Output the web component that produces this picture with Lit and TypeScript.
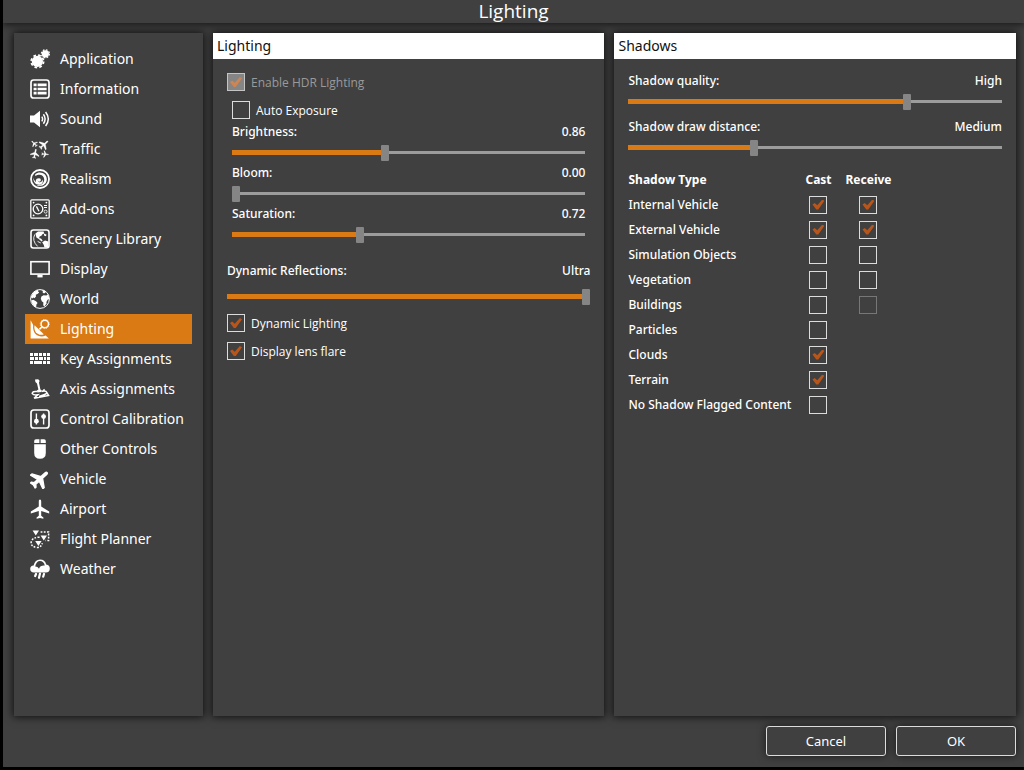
import { LitElement, html, svg, css, nothing } from "lit";
import { customElement, property, state } from "lit/decorators.js";
import { classMap } from "lit/directives/class-map.js";

const plane =
  "M10 .4c.8 0 1.200.9 1.200 2v5.200l8 5v1.800l-8-2.300v4.600l2.200 1.700v1.300L10 18.900l-3.400.8v-1.300l2.200-1.700v-4.600l-8 2.300v-1.800l8-5V2.400c0-1.100.4-2 1.200-2z";

const icons = {
  application: svg`
    <circle cx="7.400" cy="12.400" r="5.600"/>
    <circle cx="7.400" cy="12.400" r="6.200" fill="none" stroke="currentColor" stroke-width="1.800" stroke-dasharray="2.700 2.170"/>
    <circle cx="15.400" cy="4.800" r="3.600"/>
    <circle cx="15.400" cy="4.800" r="4" fill="none" stroke="currentColor" stroke-width="1.200" stroke-dasharray="1.700 1.440"/>`,
  information: svg`
    <rect x="1" y="1" width="18" height="18" rx="2.600" fill="none" stroke="currentColor" stroke-width="1.700"/>
    <path d="M3.600 4.600h3v2.600h-3zM7.600 4.600h9v2.600h-9zM3.600 8.700h3v2.600h-3zM7.600 8.700h9v2.600h-9zM3.600 12.800h3v2.600h-3zM7.600 12.800h9v2.600h-9z"/>`,
  sound: svg`
    <path d="M0 6.600h4l6-4.800v16.400l-6-4.800H0z"/>
    <path d="M11.800 7.600q1.600 2.400 0 4.800M13.400 5.200q3.400 4.800 0 9.600M15.600 3q5.400 7 0 14" fill="none" stroke="currentColor" stroke-width="1.500"/>`,
  traffic: svg`
    <g stroke="currentColor" stroke-width=".6">
      <path d=${plane} transform="translate(4.200 4.600) rotate(-45) scale(.36) translate(-10 -10)"/>
      <path d=${plane} transform="translate(14 5.600) rotate(48) scale(.54) translate(-10 -10)"/>
      <path d=${plane} transform="translate(5 14.600) rotate(12) scale(.48) translate(-10 -10)"/>
      <path d=${plane} transform="translate(15.200 15.200) rotate(95) scale(.36) translate(-10 -10)"/>
    </g>`,
  realism: svg`
    <circle cx="10" cy="10" r="9" fill="none" stroke="currentColor" stroke-width="1.800"/>
    <path d="M5.200 5.200C10 1.400 16.800 4.600 16.800 10.200c0 5.400-6 8.200-10.400 5.800 5 .6 8-2.200 7.800-5.800C14 6 9.600 4.200 5.200 7z"/>
    <path d="M3.400 8.600c-.4 4 2 7.600 6.200 7.200 3.200-.4 4-3.400 2.800-5.200 0 2-1.600 3-3.200 2.600-1.800-.4-1.800-2.600-.2-3.400C6.600 8.800 5.200 11 6 13.200 4.600 12.200 3.600 10.400 3.400 8.600z"/>
    <circle cx="9.200" cy="11" r="1.700"/>`,
  addons: svg`
    <rect x=".8" y=".8" width="18.400" height="18.400" rx="1" fill="none" stroke="currentColor" stroke-width="1.300"/>
    <circle cx="8" cy="10" r="4.800" fill="none" stroke="currentColor" stroke-width="1.300"/>
    <path d="m6.400 7.400 2.600 4.800" stroke="currentColor" stroke-width="1.300"/>
    <circle cx="3.600" cy="3.600" r=".9"/><circle cx="16.400" cy="3.600" r=".9"/><circle cx="3.600" cy="16.400" r=".9"/><circle cx="16.400" cy="16.400" r=".9"/>
    <path d="M14 6h3v1h-3zM14 8h3v1h-3z"/>
    <circle cx="15.600" cy="12.600" r="1.500" fill="none" stroke="currentColor" stroke-width=".8"/>`,
  scenery: svg`
    <rect x="1" y="1" width="18" height="18" rx="2.400" fill="none" stroke="currentColor" stroke-width="1.600"/>
    <path d="M5.400 4.600 8 2.600h5.600l.6 2-1.800.6-1 1.600-1.800.6-.4 1.800 1.800.4 1.600 1.800-1 1L8.800 10 6.400 8.400zM14 4.400l2.600 1.400-.8 1.400-1.800-.8zM12.200 13.200l2.800-1.600 3.400 1v5.800h-4l-.6-2.400z"/>
    <path d="M4.800 5.400Q1.600 11.600 7.600 17.400M7.600 12.400l3.200 1.600" fill="none" stroke="currentColor" stroke-width=".9"/>`,
  display: svg`
    <rect x=".9" y="2.700" width="18.200" height="12.400" fill="none" stroke="currentColor" stroke-width="1.600"/>
    <path d="M7.400 16h5.200v2.400H7.400z"/>`,
  world: svg`
    <circle cx="10" cy="10" r="9.400" fill="none" stroke="currentColor" stroke-width="1"/>
    <path d="M7.600.8 3.600 3.200.8 8l1.400 1.600 1.200-1.200 1 .8L6 7.600l-.2-1.800 2-1 1.400-1.400-1-1zM1.200 11.400l2-.6 2.800 1.400 1.600 1.800-1.200 1.600-.2 2.600-1.800-.6-2.200-3zM12 .8l.8 1.400-.2 1.400 1.400.8 1.600-.8-.4-1.800zM11.400 7.400l2.200-1.200 2.600.4 2.200-1 .9 4.400-1.700.8-1.200 2.200.2 1.400-2.200 3.200-1.200-1.400.2-2.800-1.600-1.200-1-2.400z"/>`,
  lighting: svg`
    <path d="M.6 1.200v18.400h18.200l-3.200-3.200c-4.800 2.800-13.600.2-12.400-10.400z"/>
    <path d="M4.600 6.200l9.200 9C8.800 17.400 3 13 4.600 6.200z"/>
    <path d="m9.400 10.400 3-3" stroke="currentColor" stroke-width="1.600"/>
    <circle cx="14.800" cy="5" r="3.700" fill="none" stroke="currentColor" stroke-width="1.500"/>
    <circle cx="14.800" cy="5" r="4.700" fill="none" stroke="currentColor" stroke-width=".6" stroke-dasharray="1 1.460"/>`,
  keys: svg`
    <path d="M0 4h3v3H0zM4 4h4v3H4zM9 4h3v3H9zM13 4h3v3h-3zM17 4h3v3h-3zM0 8h4v3H0zM5 8h3v3H5zM9 8h4v3H9zM14 8h2v3h-2zM17 8h3v3h-3zM0 12h3v3H0zM4 12h8v3H4zM13 12h3v3h-3zM17 12h3v3h-3z"/>`,
  axis: svg`
    <path d="M5 .6 8.200.2l1.400 1.600-.6 2 1.400 6.800 1.400.6-.4 1.800-4 .4-.6-2 1.600-1L7 4.600 5.400 3z"/>
    <path d="M7 12.600q-4.600-.6-4.800 2 1.400 1.800 5.600 1.200L4 19.200M11.600 12.400q4.600-1 5.400 1.400-1.600 2.200-8 3.600M4.200 19.200l14.400-2.800-1.600-2.600M12.600 12.200l2-1.800" fill="none" stroke="currentColor" stroke-width="1.500"/>`,
  calibration: svg`
    <rect x="1" y="1" width="18" height="18" rx="2.800" fill="none" stroke="currentColor" stroke-width="1.700"/>
    <path d="M5.700 4.400h1.400v11.200H5.700zM12.900 4.400h1.400v11.200h-1.400z"/>
    <circle cx="6.400" cy="12.200" r="2.400"/><circle cx="13.600" cy="7.600" r="2.400"/>`,
  mouse: svg`
    <path d="M4.200 4V2q0-1.800 1.800-1.800h3.400V4zM10.600.2H14q1.800 0 1.800 1.800v2h-5.200zM4.200 5.200h11.600V14q0 5.800-5.800 5.800T4.200 14z"/>`,
  vehicle: svg`<path d=${plane} transform="rotate(48 10 10)" stroke="currentColor" stroke-width="1.300" stroke-linejoin="round"/>`,
  airport: svg`<path d=${plane}/>`,
  planner: svg`
    <path d="M2.600 1.400h6.400L5.800 6.400zM10.600 6.600H17l-3.200 5zM5.200 12h6.400l-3.200 5z"/>
    <path d="M10.600 3h8v8.600h-3M9.600 8.200Q2 8.400 1.200 13t6.200 5.600q3.600-.2 5-4.400" fill="none" stroke="currentColor" stroke-width="1.500" stroke-dasharray="1.800 1.400"/>`,
  weather: svg`
    <path fill-rule="evenodd" d="M4 13.600Q.2 13.200.2 10q0-3 3.400-3.400Q5 .6 10 .6q5 0 6.200 5 3.600.4 3.600 4 0 3.800-4 4zM5.200 7.600Q7.600 7.400 9 9.800q1.200-3.600 5.800-3.200Q13.800 2 10 2T5.200 7.600z"/>
    <path d="m6 15-.8 2M10 14.600l-1 4.200M14 15l-.8 2.600" stroke="currentColor" stroke-width="2.200" stroke-linecap="round"/>`,
};

type IconName = keyof typeof icons;

const pages: [string, IconName][] = [
  ["Application", "application"],
  ["Information", "information"],
  ["Sound", "sound"],
  ["Traffic", "traffic"],
  ["Realism", "realism"],
  ["Add-ons", "addons"],
  ["Scenery Library", "scenery"],
  ["Display", "display"],
  ["World", "world"],
  ["Lighting", "lighting"],
  ["Key Assignments", "keys"],
  ["Axis Assignments", "axis"],
  ["Control Calibration", "calibration"],
  ["Other Controls", "mouse"],
  ["Vehicle", "vehicle"],
  ["Airport", "airport"],
  ["Flight Planner", "planner"],
  ["Weather", "weather"],
];

type Cell = "on" | "off" | "locked" | null;

const shadowRows: [string, Cell, Cell][] = [
  ["Internal Vehicle", "on", "on"],
  ["External Vehicle", "on", "on"],
  ["Simulation Objects", "off", "off"],
  ["Vegetation", "off", "off"],
  ["Buildings", "off", "locked"],
  ["Particles", "off", null],
  ["Clouds", "on", null],
  ["Terrain", "on", null],
  ["No Shadow Flagged Content", "off", null],
];

const checkboxStyles = css`
  input[type="checkbox"] {
    appearance: none;
    display: grid;
    place-items: center;
    flex: none;
    box-sizing: border-box;
    width: 18px;
    height: 18px;
    margin: 0;
    border: 1px solid #dcdcdc;
  }
  input[type="checkbox"]:checked::before {
    content: "";
    width: 12px;
    height: 10px;
    background: #b8551a;
    clip-path: polygon(0 50%, 18% 34%, 40% 58%, 82% 0, 100% 12%, 48% 100%, 32% 100%);
  }
  input[type="checkbox"]:disabled {
    border-color: #777;
  }
  input[type="checkbox"]:disabled:checked {
    border-color: #c4c4c4;
    background: #858585;
  }
  input[type="checkbox"]:disabled:checked::before {
    background: #cf8552;
  }
`;

@customElement("option-check")
class OptionCheck extends LitElement {
  @property() label = "";
  @property({ type: Boolean }) checked = false;
  @property({ type: Boolean }) disabled = false;

  static styles = [
    checkboxStyles,
    css`
      :host {
        display: block;
        font-family: "Open Sans", "Noto Sans", sans-serif;
        font-weight: 400;
      }
      .row {
        display: flex;
        align-items: center;
        gap: 6px;
        height: 28px;
      }
      .disabled {
        color: #9a9a9a;
      }
    `,
  ];

  render() {
    return html`<label class=${classMap({ row: true, disabled: this.disabled })}>
      <input type="checkbox" .checked=${this.checked} ?disabled=${this.disabled} />
      <span>${this.label}</span>
    </label>`;
  }
}

@customElement("option-slider")
class OptionSlider extends LitElement {
  @property() label = "";
  @property({ type: Number }) value = 0;
  @property({ type: Number }) max = 1;
  @property({ type: Number }) step = 1;
  @property({ attribute: false }) names: string[] = [];

  static styles = css`
    :host {
      display: block;
    }
    .head {
      display: flex;
      justify-content: space-between;
      padding-bottom: var(--label-gap, 0);
      line-height: 16px;
    }
    input {
      appearance: none;
      display: block;
      width: 100%;
      height: 25px;
      margin: 0;
      background:
        linear-gradient(#d97a14, #d97a14) left center / var(--fill) 5px no-repeat,
        linear-gradient(#9c9c9c, #9c9c9c) left center / 100% 3px no-repeat;
    }
    input::-webkit-slider-thumb {
      appearance: none;
      width: 8px;
      height: 16px;
      border-radius: 1px;
      background: #858585;
    }
  `;

  render() {
    const text = this.names.length ? this.names[this.value] : this.value.toFixed(2);
    return html`
      <div class="head">
        <label for="range">${this.label}</label>
        <output for="range">${text}</output>
      </div>
      <input
        id="range"
        type="range"
        min="0"
        max=${this.max}
        step=${this.step}
        .value=${String(this.value)}
        style="--fill: ${(this.value / this.max) * 100}%"
        @input=${(e: Event) => (this.value = Number((e.target as HTMLInputElement).value))}
      />
    `;
  }
}

@customElement("app-root")
class AppRoot extends LitElement {
  @state() page = "Lighting";

  static styles = [
    checkboxStyles,
    css`
      :host {
        display: flex;
        flex-direction: column;
        box-sizing: border-box;
        min-height: 100vh;
        border: solid #000;
        border-width: 0 0 3px 3px;
        background: #404040;
        color: #fff;
        font: 500 12px "Noto Sans", "Open Sans", sans-serif;
      }
      .title {
        margin: 0;
        height: 23px;
        background: #404040;
        box-shadow: 0 0 8px 1px rgba(0, 0, 0, 0.75);
        text-align: center;
        font-family: "Open Sans", "Noto Sans", sans-serif;
        font-size: 19px;
        font-weight: 400;
        line-height: 23px;
      }
      .main {
        flex: 1;
        display: grid;
        grid-template-columns: 189px minmax(0, 391fr) minmax(0, 401fr);
        gap: 10px;
        padding: 10px 8px 0 11px;
      }
      .panel {
        background: #404040;
        box-shadow: 0 0 8px 1px rgba(0, 0, 0, 0.75);
      }
      .nav {
        display: flex;
        flex-direction: column;
        padding: 11px;
      }
      .item {
        display: flex;
        align-items: center;
        gap: 10px;
        height: 30px;
        padding: 0 5px;
        color: #fff;
        font-size: 14px;
        font-weight: 400;
        line-height: 20px;
        text-decoration: none;
        white-space: nowrap;
      }
      .current {
        background: #d97a14;
      }
      .icon {
        flex: none;
        width: 20px;
        height: 20px;
        fill: currentColor;
      }
      .heading {
        margin: 0;
        padding: 0 4px;
        background: #fff;
        color: #111;
        font-size: 14px;
        font-weight: 400;
        line-height: 26px;
      }
      .options {
        padding: 9px 14px;
      }
      .nested {
        padding: 0 5px 16px;
      }
      .reflections {
        --label-gap: 5px;
      }
      .shadows {
        display: flex;
        flex-direction: column;
        gap: 5px;
        padding: 14px;
      }
      .table {
        table-layout: fixed;
        width: 270px;
        margin-top: 2px;
        border-collapse: collapse;
      }
      .table tr {
        height: 25px;
      }
      .table th,
      .table td {
        padding: 0;
        text-align: left;
        font-weight: inherit;
        white-space: nowrap;
      }
      .table thead th {
        font-weight: 700;
      }
      .table .cast,
      .table .receive {
        text-align: center;
      }
      .cast {
        width: 40px;
      }
      .receive {
        width: 60px;
      }
      .table input {
        margin: 0 auto;
      }
      .footer {
        display: flex;
        justify-content: flex-end;
        gap: 10px;
        padding: 10px 8px 11px;
      }
      .button {
        width: 120px;
        height: 30px;
        padding: 0;
        border: 1px solid #dcdcdc;
        border-radius: 3px;
        background: #404040;
        box-shadow: 0 0 8px rgba(0, 0, 0, 0.6);
        color: #fff;
        font: inherit;
        font-size: 13px;
        font-weight: 400;
      }
    `,
  ];

  private cell(name: string, kind: string, value: Cell) {
    return html`<td class=${kind.toLowerCase()}>
      ${value === null
        ? nothing
        : html`<input
            type="checkbox"
            aria-label="${name}: ${kind}"
            .checked=${value === "on"}
            ?disabled=${value === "locked"}
          />`}
    </td>`;
  }

  render() {
    return html`
      <h1 class="title">${this.page}</h1>
      <main class="main">
        <nav class="panel nav">
          ${pages.map(
            ([name, icon]) => html`<a
              href="#"
              class=${classMap({ item: true, current: name === this.page })}
              @click=${(e: Event) => e.preventDefault()}
            >
              <svg class="icon" viewBox="0 0 20 20" aria-hidden="true">${icons[icon]}</svg>
              <span>${name}</span>
            </a>`
          )}
        </nav>
        <section class="panel">
          <h2 class="heading">Lighting</h2>
          <div class="options">
            <option-check label="Enable HDR Lighting" checked disabled></option-check>
            <div class="nested">
              <option-check label="Auto Exposure"></option-check>
              <option-slider label="Brightness:" max="2" step="0.01" value="0.86"></option-slider>
              <option-slider label="Bloom:" max="2" step="0.01" value="0"></option-slider>
              <option-slider label="Saturation:" max="2" step="0.01" value="0.72"></option-slider>
            </div>
            <option-slider
              class="reflections"
              label="Dynamic Reflections:"
              max="4"
              value="4"
              .names=${["Off", "Low", "Medium", "High", "Ultra"]}
            ></option-slider>
            <option-check label="Dynamic Lighting" checked></option-check>
            <option-check label="Display lens flare" checked></option-check>
          </div>
        </section>
        <section class="panel">
          <h2 class="heading">Shadows</h2>
          <div class="shadows">
            <option-slider
              label="Shadow quality:"
              max="4"
              value="3"
              .names=${["Off", "Low", "Medium", "High", "Ultra"]}
            ></option-slider>
            <option-slider
              label="Shadow draw distance:"
              max="3"
              value="1"
              .names=${["Low", "Medium", "High", "Ultra"]}
            ></option-slider>
            <table class="table">
              <thead>
                <tr>
                  <th scope="col">Shadow Type</th>
                  <th scope="col" class="cast">Cast</th>
                  <th scope="col" class="receive">Receive</th>
                </tr>
              </thead>
              <tbody>
                ${shadowRows.map(
                  ([name, cast, receive]) => html`<tr>
                    <th scope="row">${name}</th>
                    ${this.cell(name, "Cast", cast)} ${this.cell(name, "Receive", receive)}
                  </tr>`
                )}
              </tbody>
            </table>
          </div>
        </section>
      </main>
      <footer class="footer">
        <button class="button" type="button">Cancel</button>
        <button class="button" type="button">OK</button>
      </footer>
    `;
  }
}
